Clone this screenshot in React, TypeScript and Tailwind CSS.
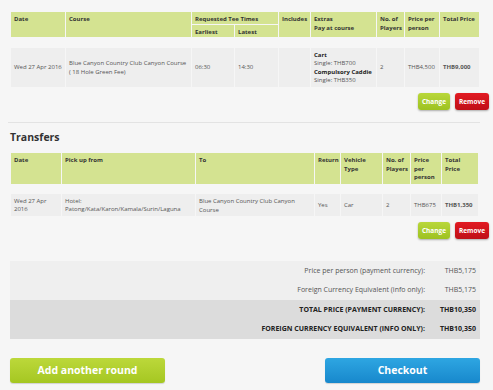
import React from 'react';

const th = 'bg-[#d4e391] px-[3px] pt-[3px] text-[6px] font-bold leading-[8.5px] text-[#333]';
const td = 'bg-[#eeeeee] px-[3px] text-[6px] leading-[8.5px] text-[#555] flex items-center';

const SmallButtons: React.FC = () => (
  <div className="flex justify-end gap-[5px] pr-[4px]">
    <button className="h-[17px] w-[32px] rounded-[3px] bg-gradient-to-b from-[#b9d73a] to-[#9dc220] text-[6.5px] font-bold text-white shadow-[0_1px_2px_rgba(0,0,0,0.3)]">
      Change
    </button>
    <button className="h-[17px] w-[34px] rounded-[3px] bg-gradient-to-b from-[#e21a22] to-[#bf0f17] text-[6.5px] font-bold text-white shadow-[0_1px_2px_rgba(0,0,0,0.3)]">
      Remove
    </button>
  </div>
);

const SummaryRow: React.FC<{ label: string; value: string; strong?: boolean }> = ({ label, value, strong }) => (
  <div
    className={`flex h-[19.5px] items-center justify-end text-[7px] ${
      strong ? 'bg-[#dcdcdc] font-bold text-[#222]' : 'bg-[#efefef] text-[#555]'
    }`}
  >
    <span>{label}</span>
    <span className="w-[55px] pr-[4px] text-right">{value}</span>
  </div>
);

export default function App() {
  return (
    <div
      className="min-h-[390px] w-[493px] bg-[#f6f6f6] pb-[8px]"
      style={{ fontFamily: '"Open Sans", "Liberation Sans", sans-serif' }}
    >
      {/* Golf round */}
      <div className="pl-[11px] pt-[12px]">
        <div className="grid grid-cols-[54px_125px_42px_43px_31px_65px_27px_34px_39px] grid-rows-[12px_12px] gap-[1px]">
          <div className={`${th} row-span-2`}>Date</div>
          <div className={`${th} row-span-2`}>Course</div>
          <div className={`${th} col-span-2`}>Requested Tee Times</div>
          <div className={`${th} row-span-2`}>Includes</div>
          <div className={`${th} row-span-2`}>
            Extras
            <br />
            Pay at course
          </div>
          <div className={`${th} row-span-2`}>
            No. of
            <br />
            Players
          </div>
          <div className={`${th} row-span-2`}>
            Price per
            <br />
            person
          </div>
          <div className={`${th} row-span-2 whitespace-nowrap`}>Total Price</div>
          <div className={th}>Earliest</div>
          <div className={th}>Latest</div>
        </div>
        <div className="mt-[11px] grid h-[39px] grid-cols-[54px_125px_42px_43px_31px_65px_27px_34px_39px] gap-[1px]">
          <div className={td}>
            <div>Wed 27 Apr 2016</div>
          </div>
          <div className={td}>
            <div>
              Blue Canyon Country Club Canyon Course
              <br />( 18 Hole Green Fee)
            </div>
          </div>
          <div className={td}>
            <div>06:30</div>
          </div>
          <div className={td}>
            <div>14:30</div>
          </div>
          <div className={td}></div>
          <div className={td}>
            <div className="whitespace-nowrap">
              <div className="font-bold text-[#222]">Cart</div>
              <div>Single: THB700</div>
              <div className="font-bold text-[#222]">Compulsory Caddie</div>
              <div>Single: THB350</div>
            </div>
          </div>
          <div className={td}>
            <div>2</div>
          </div>
          <div className={td}>
            <div>THB4,500</div>
          </div>
          <div className={`${td} font-bold text-[#222]`}>
            <div>THB9,000</div>
          </div>
        </div>
        <div className="mt-[6px]">
          <SmallButtons />
        </div>
      </div>

      <div className="mx-[8px] mt-[12px] h-px w-[472px] bg-[#e3e3e3]" />

      {/* Transfers */}
      <div className="pl-[11px]">
        <h2 className="ml-[-1px] mt-[7px] text-[10.5px] font-bold leading-[14px] text-[#333]">Transfers</h2>
        <div className="mt-[9px] grid h-[31px] grid-cols-[50px_133px_118px_25px_41px_27px_30px_36px] gap-[1px]">
          <div className={th}>Date</div>
          <div className={th}>Pick up from</div>
          <div className={th}>To</div>
          <div className={th}>Return</div>
          <div className={th}>
            Vehicle
            <br />
            Type
          </div>
          <div className={th}>
            No. of
            <br />
            Players
          </div>
          <div className={th}>
            Price
            <br />
            per
            <br />
            person
          </div>
          <div className={th}>
            Total
            <br />
            Price
          </div>
        </div>
        <div className="mt-[10px] grid h-[22px] grid-cols-[50px_133px_118px_25px_41px_27px_30px_36px] gap-[1px]">
          <div className={td}>
            <div>
              Wed 27 Apr
              <br />
              2016
            </div>
          </div>
          <div className={td}>
            <div>
              Hotel:
              <br />
              Patong/Kata/Karon/Kamala/Surin/Laguna
            </div>
          </div>
          <div className={`${td} !items-start pt-[3px]`}>
            <div>Blue Canyon Country Club Canyon Course</div>
          </div>
          <div className={td}>
            <div>Yes</div>
          </div>
          <div className={td}>
            <div>Car</div>
          </div>
          <div className={td}>
            <div>2</div>
          </div>
          <div className={td}>
            <div>THB675</div>
          </div>
          <div className={`${td} font-bold text-[#222]`}>
            <div>THB1,350</div>
          </div>
        </div>
        <div className="mt-[6px]">
          <SmallButtons />
        </div>
      </div>

      {/* Summary */}
      <div className="mx-[10px] mt-[22px] w-[470px]">
        <SummaryRow label="Price per person (payment currency):" value="THB5,175" />
        <SummaryRow label="Foreign Currency Equivalent (info only):" value="THB5,175" />
        <SummaryRow label="TOTAL PRICE (PAYMENT CURRENCY):" value="THB10,350" strong />
        <SummaryRow label="FOREIGN CURRENCY EQUIVALENT (INFO ONLY):" value="THB10,350" strong />
      </div>

      <div className="mx-[10px] mt-[19px] flex w-[470px] justify-between">
        <button className="h-[25px] w-[155px] rounded-[3px] bg-gradient-to-b from-[#bcd83a] to-[#a5c721] text-[10.5px] font-bold text-white shadow-[0_1px_1px_rgba(0,0,0,0.15)]">
          Add another round
        </button>
        <button className="h-[25px] w-[155px] rounded-[3px] bg-gradient-to-b from-[#2ea6e2] to-[#1788cc] text-[10.5px] font-bold text-white shadow-[0_1px_1px_rgba(0,0,0,0.15)]">
          Checkout
        </button>
      </div>
    </div>
  );
}
